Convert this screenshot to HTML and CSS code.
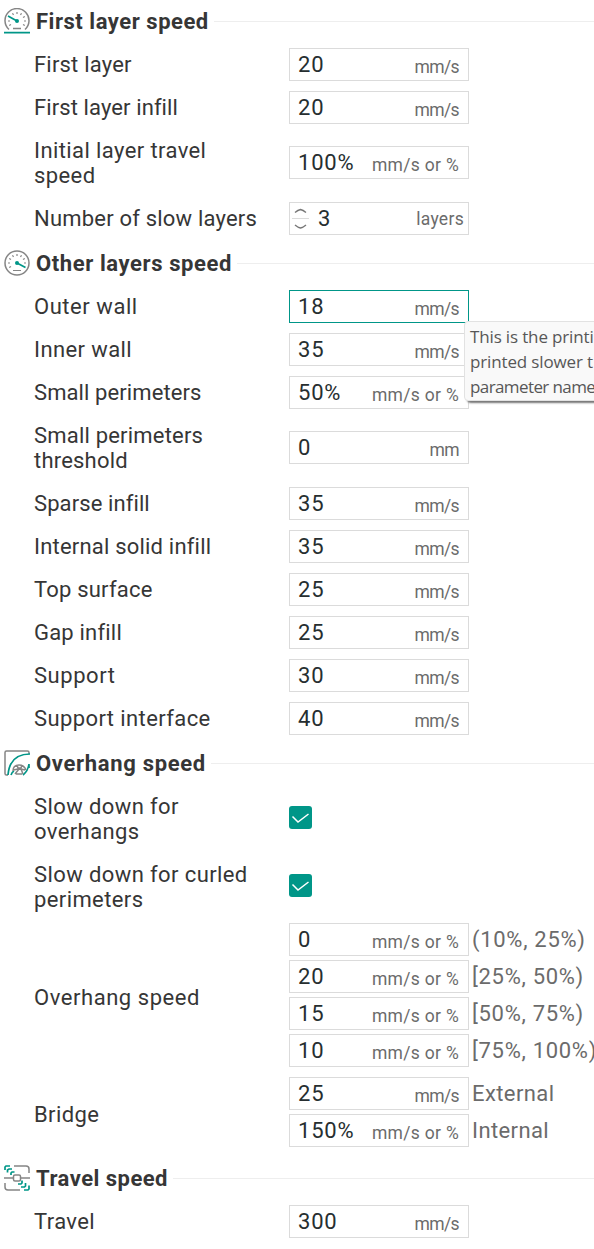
FILE: index.html
```html
<!DOCTYPE html>
<html lang="en">
<head>
<meta charset="utf-8">
<title>Speed settings</title>
<link rel="stylesheet" href="styles.css">
</head>
<body>
<main class="panel">
  <section>
    <h2 class="head head-first">
      <svg class="icon" viewBox="0 0 26 26"><path class="g" d="M5 21.5A12 12 0 1 1 21 21.5M9 20.500h8"/><path class="g thin" d="M13 4v2M8.500 5.200l1 1.800M17.500 5.200l-1 1.800M20.800 8.500l-1.800 1M22 13h-2M20.800 17.500l-1.800-1M4 13h2M5.200 17.500l1.800-1"/><path class="t" d="M0 24.700H26M4 8L13 13"/><circle class="dot" cx="13" cy="13" r="2"/></svg>
      <span class="w1">First layer speed</span><i class="rule"></i></h2>
    <div class="row"><label class="label">First layer</label><div class="field"><b>20</b><span>mm/s</span></div></div>
    <div class="row"><label class="label snug">First layer infill</label><div class="field"><b>20</b><span>mm/s</span></div></div>
    <div class="row tall"><label class="label medium">Initial layer travel<br>speed</label><div class="field"><b>100%</b><span class="long">mm/s or %</span></div></div>
    <div class="row"><label class="label">Number of slow layers</label><div class="field spin"><svg class="arrows" viewBox="0 0 17 23"><path d="M3 5.500Q6 3 8.500 2.500Q11 3 14 5.500M3 18Q6 20.500 8.500 21Q11 20.500 14 18"/><path class="mid" d="M0 11.500H17"/></svg><b>3</b><span class="long">layers</span></div></div>
  </section>
  <section>
    <h2 class="head">
      <svg class="icon" viewBox="0 0 26 26"><circle class="g" cx="13" cy="13" r="12"/><path class="g thin" d="M9 20.500h8M13 4v2M8.500 5.200l1 1.800M17.500 5.200l-1 1.800M20.800 8.500l-1.800 1M5.200 8.500l1.800 1M22 13h-2M4 13h2M5.200 17.500l1.800-1"/><path class="t" d="M13 13L21.500 17.500"/><circle class="dot" cx="13" cy="13" r="2"/></svg>
      <span class="w2">Other layers speed</span><i class="rule"></i></h2>
    <div class="row"><label class="label wide">Outer wall</label><div class="field active"><b>18</b><span>mm/s</span>
      <div class="tip">This is the printi<br>printed slower t<br><small>parameter name</small></div></div></div>
    <div class="row"><label class="label medium">Inner wall</label><div class="field"><b>35</b><span>mm/s</span></div></div>
    <div class="row"><label class="label snug">Small perimeters</label><div class="field"><b>50%</b><span class="long">mm/s or %</span></div></div>
    <div class="row tall"><label class="label">Small perimeters<br>threshold</label><div class="field"><b>0</b><span>mm</span></div></div>
    <div class="row"><label class="label snug">Sparse infill</label><div class="field"><b>35</b><span>mm/s</span></div></div>
    <div class="row"><label class="label">Internal solid infill</label><div class="field"><b>35</b><span>mm/s</span></div></div>
    <div class="row"><label class="label">Top surface</label><div class="field"><b>25</b><span>mm/s</span></div></div>
    <div class="row"><label class="label">Gap infill</label><div class="field"><b>25</b><span>mm/s</span></div></div>
    <div class="row"><label class="label wide">Support</label><div class="field"><b>30</b><span>mm/s</span></div></div>
    <div class="row"><label class="label medium">Support interface</label><div class="field"><b>40</b><span>mm/s</span></div></div>
  </section>
  <section>
    <h2 class="head">
      <svg class="icon" viewBox="0 0 26 26"><path class="g" d="M4 25H2.500Q1 25 1 23.500V2.500Q1 1 2.500 1H23.500Q25 1 25 2.500V4"/><path class="t" d="M4 25C5 13 11 4 26 4M7 25Q8 22 10 21M19 25Q24 21 25 14V18"/><path class="g" d="M9 21Q9 15 15 15Q20 15 22 20M10 20Q15 18 21 20M13 15l1 3h3l1-3M11 24l4-5M17 19l2 5M12 24h6"/></svg>
      <span class="w3">Overhang speed</span><i class="rule"></i></h2>
    <div class="row tall"><label class="label medium">Slow down for<br>overhangs</label><svg class="check" viewBox="0 0 23 23"><path d="M3.500 10.500L9 16L19.500 8"/></svg></div>
    <div class="row tall"><label class="label medium">Slow down for curled<br>perimeters</label><svg class="check" viewBox="0 0 23 23"><path d="M3.500 10.500L9 16L19.500 8"/></svg></div>
    <div class="row group"><label class="label wide">Overhang speed</label>
      <div class="stack">
        <div class="line"><div class="field"><b>0</b><span class="long">mm/s or %</span></div><em>(10%, 25%)</em></div>
        <div class="line"><div class="field"><b>20</b><span class="long">mm/s or %</span></div><em>[25%, 50%)</em></div>
        <div class="line"><div class="field"><b>15</b><span class="long">mm/s or %</span></div><em>[50%, 75%)</em></div>
        <div class="line"><div class="field"><b>10</b><span class="long">mm/s or %</span></div><em>[75%, 100%)</em></div>
      </div></div>
    <div class="row group"><label class="label medium">Bridge</label>
      <div class="stack">
        <div class="line"><div class="field"><b>25</b><span>mm/s</span></div><em class="word">External</em></div>
        <div class="line"><div class="field"><b>150%</b><span class="long">mm/s or %</span></div><em class="word">Internal</em></div>
      </div></div>
  </section>
  <section>
    <h2 class="head">
      <svg class="icon" viewBox="0 0 26 26"><path class="g" d="M10 1H22Q25 1 25 4V8M0 13H9M17 13H26M1 18V22Q1 25 4 25H16"/><rect class="g" x="9.500" y="10" width="7" height="6" rx="1.500"/><path class="t" d="M1 5V2L2 1H6M3.500 7.500V5L5 4H8M7 10V8L8 7H10.500M14 19H17L18 18V15.500M17 22H20.500L21.500 21V18M20 25H24L25 24V20.500"/></svg>
      <span class="w4">Travel speed</span><i class="rule"></i></h2>
    <div class="row"><label class="label medium">Travel</label><div class="field"><b>300</b><span>mm/s</span></div></div>
  </section>
</main>
</body>
</html>
```

FILE: styles.css
```css
* { box-sizing: border-box; }
body { margin: 0; background: #fff; color: #363636; font-family: Roboto, sans-serif; overflow: hidden; }
.panel { width: 594px; height: 1249px; overflow: hidden; }
.head { display: flex; align-items: center; height: 55px; margin: 0; padding-left: 4px; font-size: 22px; font-weight: 700; line-height: 26px; color: #363636; white-space: nowrap; }
.head span { padding-top: 2px; }
.head-first { height: 48px; padding-bottom: 7px; }
.w1 { letter-spacing: .53px; }
.w2 { letter-spacing: .6px; }
.w3 { letter-spacing: .68px; }
.w4 { letter-spacing: .48px; }
.icon { width: 26px; height: 26px; margin-right: 6px; flex: none; fill: none; }
.rule { flex: 1; height: 1px; margin: 2px 0 0 5px; background: #eee; }
.g { stroke: #858585; stroke-width: 1.5; }
.thin { stroke-width: 1.2; }
.t { stroke: #009688; stroke-width: 1.7; }
.dot { fill: #009688; }
.row { display: flex; align-items: center; margin-bottom: 10px; padding-left: 34px; }
.row:last-child { margin-bottom: 0; }
.label { width: 255px; padding: 4px 0; flex: none; font-size: 22px; line-height: 25px; letter-spacing: .2px; }
.snug { letter-spacing: .1px; }
.medium { letter-spacing: .4px; }
.wide { letter-spacing: .55px; }
.field { position: relative; display: flex; align-items: center; justify-content: space-between; width: 180px; height: 33px; padding: 0 9px 0 8px; border: 1px solid #dbdbdb; flex: none; }
.tall .field { margin-bottom: 1px; }
.field b { font-size: 22px; font-weight: 400; letter-spacing: .8px; color: #262e30; }
.field span { padding-top: 4px; font-size: 17.5px; line-height: 22px; letter-spacing: -.6px; color: #6b6b6b; }
.field .long { letter-spacing: .3px; }
.active { border-color: #009688; }
.spin { justify-content: flex-start; padding: 0 4px 0 2px; }
.spin b { margin-left: 9px; }
.field.spin span { margin-left: auto; padding-top: 0; }
.arrows { width: 17px; height: 23px; fill: none; stroke: #777; stroke-width: 1.4; }
.arrows .mid { stroke: #dbdbdb; stroke-width: 1; }
.check { width: 23px; height: 23px; margin-bottom: 3px; border-radius: 3px; background: #009688; fill: none; stroke: #fff; stroke-width: 1.5; }
.group { margin-top: -3px; }
.group + .group { margin-top: 0; }
.group:last-child { padding-bottom: 3px; }
.group .label { padding-top: 8px; }
.stack { display: grid; gap: 4px; }
.line { display: flex; align-items: center; }
.line em { margin-left: 3px; font-size: 22px; font-style: normal; letter-spacing: .7px; color: #6b6b6b; white-space: nowrap; }
.line .word { letter-spacing: .4px; }
.tip { position: absolute; left: 174px; top: 30px; z-index: 2; width: 140px; height: 80px; padding: 2px 5px; border: 1px solid #e2e2e2; border-radius: 4px; background: #f9f9f9; box-shadow: 3px 2px 2px #777; color: #575757; font: 17px/25px "Open Sans", sans-serif; letter-spacing: -.15px; white-space: nowrap; }
.tip small { font-size: 17px; letter-spacing: -.6px; }
```
